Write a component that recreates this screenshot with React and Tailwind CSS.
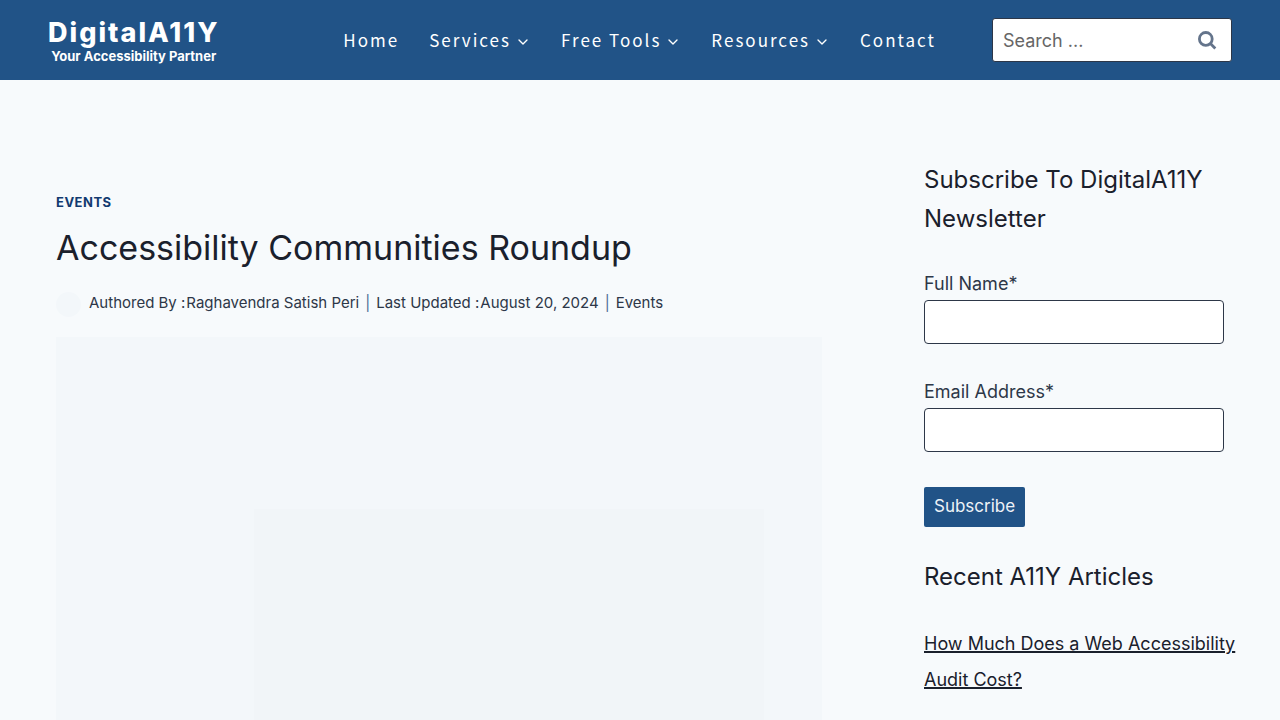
import { ChevronDown } from "lucide-react";

const navItems = [
  { label: "Home" },
  { label: "Services", menu: true },
  { label: "Free Tools", menu: true },
  { label: "Resources", menu: true },
  { label: "Contact" },
];

function SearchIcon() {
  return (
    <svg viewBox="0 0 20 20" className="h-5 w-5" fill="none" stroke="currentColor" aria-hidden="true">
      <circle cx="8.8" cy="8.9" r="6.4" strokeWidth="2.8" />
      <path d="M13.4 13.5L18.3 18.4" strokeWidth="2.8" />
    </svg>
  );
}

function Header() {
  return (
    <header className="flex h-20 items-center bg-[#215387] px-12 text-white">
      <a href="#" className="flex flex-col items-center pt-[3px]">
        <span className="text-[27px] leading-7 font-extrabold tracking-[2px]">DigitalA11Y</span>
        <span className="text-[13px] leading-[18px] font-bold">Your Accessibility Partner</span>
      </a>
      <nav aria-label="Main" className="mr-14 ml-auto">
        <ul className="flex items-center gap-[30px] font-['Noto_Sans_CJK_SC','Noto_Sans',sans-serif] text-[17px] leading-6 tracking-[2px]">
          {navItems.map((item) => (
            <li key={item.label}>
              <a href="#" className="flex items-center gap-1">
                {item.label}
                {item.menu && <ChevronDown className="mt-1 h-4 w-4" strokeWidth={2} aria-hidden="true" />}
              </a>
            </li>
          ))}
        </ul>
      </nav>
      <form role="search" className="flex h-11 w-60 items-center rounded-[3px] border border-[#2d3748] bg-white">
        <input
          type="search"
          aria-label="Search"
          placeholder="Search ..."
          className="min-w-0 flex-1 bg-transparent pl-[10px] text-[18px] text-gray-700 placeholder:text-[#666666]"
        />
        <button type="submit" aria-label="Submit search" className="pr-[14px] pl-3 text-[#64748b]">
          <SearchIcon />
        </button>
      </form>
    </header>
  );
}

function Article() {
  return (
    <article className="pt-28">
      <a href="#" className="block text-[13px] leading-5 font-bold tracking-[0.5px] text-[#123a70]">
        EVENTS
      </a>
      <h1 className="mt-3 text-[34px] leading-[48px] text-[#1a202c]">Accessibility Communities Roundup</h1>
      <div className="mt-5 flex items-start text-[15px] leading-[22px] text-[#2d3748]">
        <span className="mr-2 h-[25px] w-[25px] rounded-full bg-[#f3f7fa]" />
        <div className="flex gap-[6px]">
          <span className="flex gap-px">
            <span>Authored By :</span>
            <a href="#">Raghavendra Satish Peri</a>
          </span>
          <span aria-hidden="true" className="text-[#4a6a94]">|</span>
          <span className="flex gap-px">
            <span>Last Updated :</span>
            <time dateTime="2024-08-20">August 20, 2024</time>
          </span>
          <span aria-hidden="true" className="text-[#4a6a94]">|</span>
          <a href="#">Events</a>
        </div>
      </div>
      <div className="mt-5 bg-[#f3f7fa] pt-[172px] pr-[58px] pl-[198px]">
        <div className="h-[260px] bg-[#f1f5f8]" />
      </div>
    </article>
  );
}

function Field({ id, label, type }) {
  return (
    <div className="mb-8">
      <label htmlFor={id} className="block text-[18px] leading-8 text-[#2d3748]">{label}*</label>
      <input
        id={id}
        type={type}
        required
        className="block h-11 w-[300px] rounded-[4px] border border-[#2d3748] bg-white px-2"
      />
    </div>
  );
}

function Sidebar() {
  return (
    <aside className="pt-20">
      <h2 className="text-[24px] leading-[39px] text-[#1a202c]">Subscribe To DigitalA11Y Newsletter</h2>
      <form className="mt-[30px]">
        <Field id="full-name" label="Full Name" type="text" />
        <Field id="email" label="Email Address" type="email" />
        <button type="submit" className="mt-[3px] h-10 rounded-[2px] bg-[#215387] px-[10px] text-[17px] text-[#edf2f7]">
          Subscribe
        </button>
      </form>
      <h2 className="mt-[30px] text-[24px] leading-[39px] text-[#1a202c]">Recent A11Y Articles</h2>
      <ul className="mt-[30px]">
        <li>
          <a href="#" className="text-[18px] leading-9 text-[#1a202c] underline decoration-2">
            How Much Does a Web Accessibility Audit Cost?
          </a>
        </li>
      </ul>
    </aside>
  );
}

export default function App() {
  return (
    <div className="h-screen overflow-hidden bg-[#f7fafc] font-['Inter',sans-serif]">
      <Header />
      <main className="grid grid-cols-[minmax(0,1fr)_332px] gap-[102px] pr-6 pl-14">
        <Article />
        <Sidebar />
      </main>
    </div>
  );
}
